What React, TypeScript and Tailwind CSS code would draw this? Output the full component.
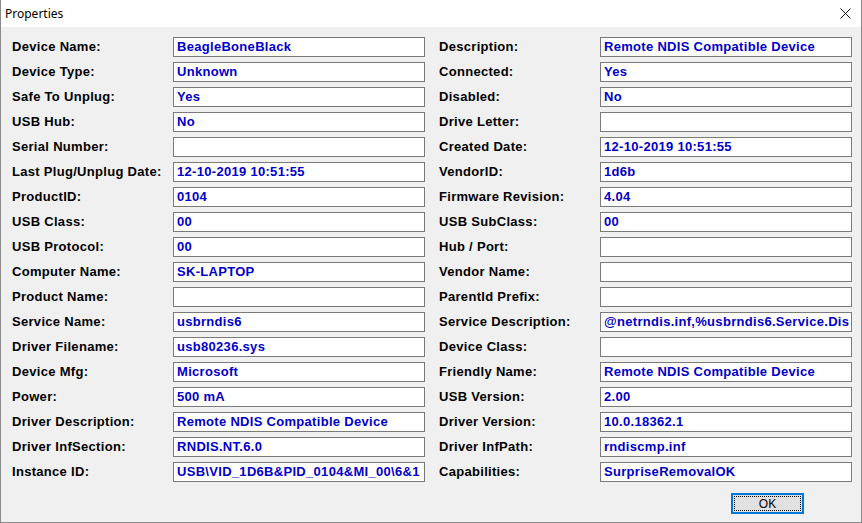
const ROWS: [string, string, string, string][] = [
  ["Device Name:", "BeagleBoneBlack", "Description:", "Remote NDIS Compatible Device"],
  ["Device Type:", "Unknown", "Connected:", "Yes"],
  ["Safe To Unplug:", "Yes", "Disabled:", "No"],
  ["USB Hub:", "No", "Drive Letter:", ""],
  ["Serial Number:", "", "Created Date:", "12-10-2019 10:51:55"],
  ["Last Plug/Unplug Date:", "12-10-2019 10:51:55", "VendorID:", "1d6b"],
  ["ProductID:", "0104", "Firmware Revision:", "4.04"],
  ["USB Class:", "00", "USB SubClass:", "00"],
  ["USB Protocol:", "00", "Hub / Port:", ""],
  ["Computer Name:", "SK-LAPTOP", "Vendor Name:", ""],
  ["Product Name:", "", "ParentId Prefix:", ""],
  ["Service Name:", "usbrndis6", "Service Description:", "@netrndis.inf,%usbrndis6.Service.Dis"],
  ["Driver Filename:", "usb80236.sys", "Device Class:", ""],
  ["Device Mfg:", "Microsoft", "Friendly Name:", "Remote NDIS Compatible Device"],
  ["Power:", "500 mA", "USB Version:", "2.00"],
  ["Driver Description:", "Remote NDIS Compatible Device", "Driver Version:", "10.0.18362.1"],
  ["Driver InfSection:", "RNDIS.NT.6.0", "Driver InfPath:", "rndiscmp.inf"],
  ["Instance ID:", "USB\\VID_1D6B&PID_0104&MI_00\\6&1", "Capabilities:", "SurpriseRemovalOK"],
];

function Field({ value }: { value: string }) {
  return (
    <div className="h-[20px] w-[252px] overflow-hidden whitespace-nowrap border border-[#7a7a7a] bg-white pl-[3px] text-[13px] font-bold leading-[18px] tracking-[0.3px] text-[#0000c8]">
      {value}
    </div>
  );
}

export default function App() {
  return (
    <div className="flex h-[523px] w-[862px] flex-col border-x border-b border-[#8a8a8a] bg-[#f0f0f0] font-['Liberation_Sans',Arial,sans-serif] text-black">
      {/* title bar */}
      <div className="flex h-[27px] items-center justify-between bg-white pl-[4px] pr-[9px]">
        <span className="font-['Noto_Sans',sans-serif] text-[12px]">Properties</span>
        <svg width="11" height="11" viewBox="0 0 11 11" className="mr-[1px]">
          <path d="M0.5 0.5 L10.5 10.5 M10.5 0.5 L0.5 10.5" stroke="#111" strokeWidth="1" />
        </svg>
      </div>

      <div className="flex flex-col pl-[11px] pr-[9px] pt-[10px]">
        <div className="grid grid-cols-[161px_252px_14px_161px_252px] gap-y-[5px]">
          {ROWS.map(([l1, v1, l2, v2]) => (
            <div key={l1} className="contents">
              <div className="flex items-center text-[13px] font-bold tracking-[0.3px]">{l1}</div>
              <Field value={v1} />
              <div />
              <div className="flex items-center text-[13px] font-bold tracking-[0.3px]">{l2}</div>
              <Field value={v2} />
            </div>
          ))}
        </div>

        <div className="mt-[11px] flex justify-end pr-[48px]">
          <button className="flex h-[21px] w-[73px] items-center justify-center border-2 border-[#0078d7] bg-[#e1e1e1] p-[1px]">
            <span className="flex h-full w-full items-center justify-center border border-dotted border-black text-[12px] leading-none">
              OK
            </span>
          </button>
        </div>
      </div>
    </div>
  );
}
